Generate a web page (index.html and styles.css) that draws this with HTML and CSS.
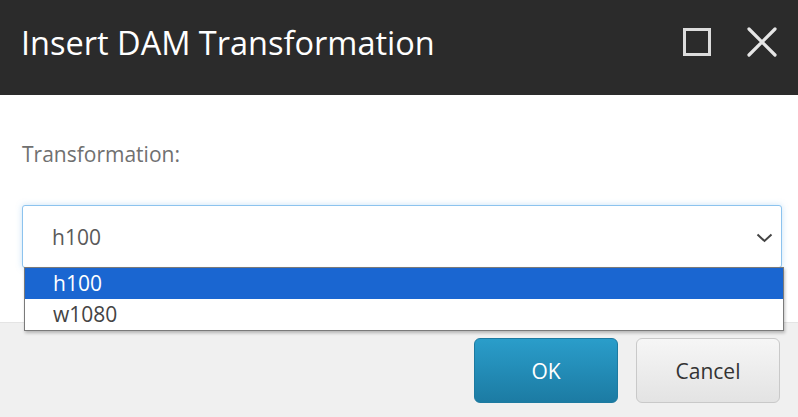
FILE: index.html
```html
<!DOCTYPE html>
<html>
<head>
<meta charset="utf-8">
<link rel="stylesheet" href="styles.css">
</head>
<body>
<div class="dialog">
  <header class="titlebar">
    <h1 class="title">Insert DAM Transformation</h1>
    <div class="controls">
      <svg class="icon" width="30" height="30" viewBox="0 0 30 30"><rect x="2.5" y="2.5" width="25" height="25" fill="none" stroke="#dcdcdc" stroke-width="3"/></svg>
      <svg class="icon" width="32" height="32" viewBox="0 0 32 32"><path d="M3 3 L29 29 M29 3 L3 29" stroke="#e6e6e6" stroke-width="3.2" stroke-linecap="round"/></svg>
    </div>
  </header>
  <main class="body">
    <label class="label">Transformation:</label>
    <div class="select-wrap">
      <div class="select">
        <span class="value">h100</span>
        <svg class="chev" width="17" height="10" viewBox="0 0 17 10"><path d="M1.5 1.5 L8.5 8 L15.5 1.5" fill="none" stroke="#444" stroke-width="2"/></svg>
      </div>
      <ul class="options">
        <li class="opt selected">h100</li>
        <li class="opt">w1080</li>
      </ul>
    </div>
  </main>
  <footer class="footer">
    <button class="btn ok">OK</button>
    <button class="btn cancel">Cancel</button>
  </footer>
</div>
</body>
</html>
```
FILE: styles.css
```css
html, body {
  margin: 0;
  padding: 0;
  width: 798px;
  height: 417px;
  overflow: hidden;
  font-family: "Open Sans", "Noto Sans", sans-serif;
}
.dialog {
  display: flex;
  flex-direction: column;
  height: 417px;
}
.titlebar {
  height: 95px;
  background: #2b2b2b;
  display: flex;
  align-items: center;
  justify-content: space-between;
  padding: 0 20px 0 21px;
  box-sizing: border-box;
}
.title {
  margin: 0;
  font-weight: 400;
  font-size: 32.5px;
  color: #ffffff;
  position: relative;
  top: -5px;
}
.controls {
  display: flex;
  align-items: center;
  gap: 34px;
  position: relative;
  top: -6px;
}
.body {
  height: 227px;
  background: #fff;
  padding: 0 16px 0 22px;
  box-sizing: border-box;
}
.label {
  display: block;
  margin-top: 47px;
  font-size: 21px;
  color: #707070;
  line-height: 24px;
}
.select-wrap {
  position: relative;
  margin-top: 39px;
}
.select {
  height: 61px;
  border: 1px solid #8cc3ee;
  border-radius: 3px;
  box-shadow: 0 0 6px rgba(102, 175, 233, 0.35);
  display: flex;
  align-items: center;
  justify-content: space-between;
  padding: 0 8px 0 29px;
  background: #fff;
}
.value {
  font-size: 21px;
  color: #5a5a5a;
}
.chev { position: relative; top: 1px; }
.options {
  position: absolute;
  left: 2px;
  right: -2px;
  top: 62px;
  margin: 0;
  padding: 0;
  list-style: none;
  background: #fff;
  border: 1px solid #7a7a7a;
  box-shadow: 1px 2px 3px rgba(0,0,0,0.25);
  z-index: 2;
}
.opt {
  height: 31px;
  line-height: 31px;
  padding-left: 28px;
  font-size: 21px;
  color: #444;
}
.opt.selected {
  background: #1a66d1;
  color: #fff;
}
.footer {
  flex: 1;
  background: #f0f0f0;
  display: flex;
  justify-content: flex-end;
  align-items: flex-start;
  padding: 15px 18px 0 0;
  gap: 18px;
  border-top: 1px solid #e4e4e4;
}
.btn {
  width: 144px;
  height: 65px;
  border-radius: 6px;
  font-family: "Open Sans", "Noto Sans", sans-serif;
  font-size: 21px;
  cursor: pointer;
}
.ok {
  background: linear-gradient(#2a9dca, #1c7ba3);
  border: 1px solid #1d7aa0;
  color: #fff;
}
.cancel {
  background: linear-gradient(#f6f6f6, #e3e3e3);
  border: 1px solid #c9c9c9;
  color: #333;
}
```
